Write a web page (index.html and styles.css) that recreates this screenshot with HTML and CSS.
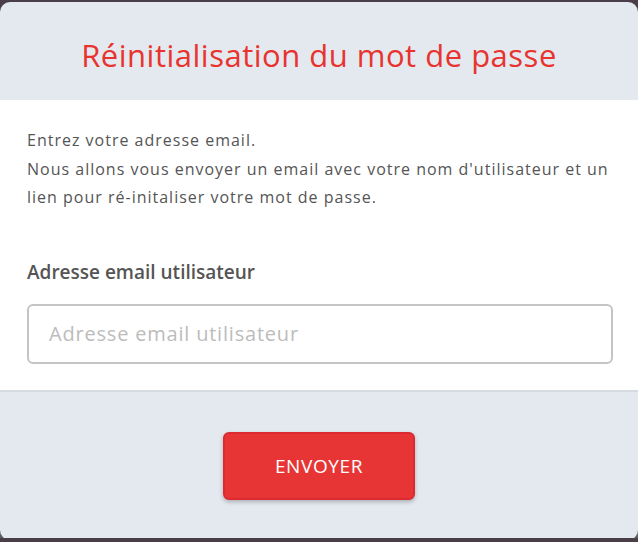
FILE: index.html
```html
<!DOCTYPE html>
<html lang="fr">
<head>
    <meta charset="UTF-8">
    <meta name="viewport" content="width=device-width, initial-scale=1.0">
    <title>Réinitialisation du mot de passe</title>
    <link rel="stylesheet" href="styles.css">
</head>
<body>
    <div class="modal">
        <div class="modal-header">
            <h1>Réinitialisation du mot de passe</h1>
        </div>
        <div class="modal-body">
            <p class="intro">Entrez votre adresse email.<br>Nous allons vous envoyer un email avec votre nom d'utilisateur et un lien pour ré-initaliser votre mot de passe.</p>
            <label for="email">Adresse email utilisateur</label>
            <input type="email" id="email" name="email" placeholder="Adresse email utilisateur">
        </div>
        <div class="modal-footer">
            <button type="submit">ENVOYER</button>
        </div>
    </div>
</body>
</html>
```

FILE: styles.css
```css
body {
    margin: 0;
    padding: 2px 0;
    background: linear-gradient(#4a3e49, #5c5c62);
    font-family: "Open Sans", sans-serif;
    height: 538px;
    box-sizing: border-box;
}

.modal {
    background-color: #e4e9f0;
    border-radius: 10px;
    overflow: hidden;
    height: 538px;
    display: flex;
    flex-direction: column;
}

.modal-header {
    height: 98px;
    display: flex;
    align-items: center;
    justify-content: center;
}

h1 {
    margin: 0;
    padding-top: 8px;
    color: #e8332f;
    font-size: 31px;
    font-weight: 500;
    letter-spacing: 0.5px;
}

.modal-body {
    background-color: #fff;
    padding: 26px 25px 26px 27px;
    border-bottom: 2px solid #d6dbe2;
}

.intro {
    margin: 0 0 47px;
    font-size: 16px;
    line-height: 28.5px;
    letter-spacing: 1px;
    color: #555;
}

label {
    display: block;
    margin-bottom: 19px;
    font-size: 19px;
    font-weight: 600;
    color: #555;
}

input {
    width: 100%;
    box-sizing: border-box;
    height: 60px;
    padding: 0 20px;
    border: 2px solid #c4c4c4;
    border-radius: 6px;
    font-family: inherit;
    font-size: 20px;
    letter-spacing: 0.8px;
    color: #555;
}

input::placeholder {
    color: #bcbcbc;
}

.modal-footer {
    flex: 1;
    display: flex;
    justify-content: center;
    padding-top: 40px;
}

button {
    width: 192px;
    height: 68px;
    border: 2px solid #dc2a30;
    border-radius: 6px;
    background-color: #e73535;
    color: #fff;
    font-family: inherit;
    font-size: 19px;
    letter-spacing: 0.6px;
    box-shadow: 0 2px 4px rgba(0, 0, 0, 0.25);
    cursor: pointer;
}
```
